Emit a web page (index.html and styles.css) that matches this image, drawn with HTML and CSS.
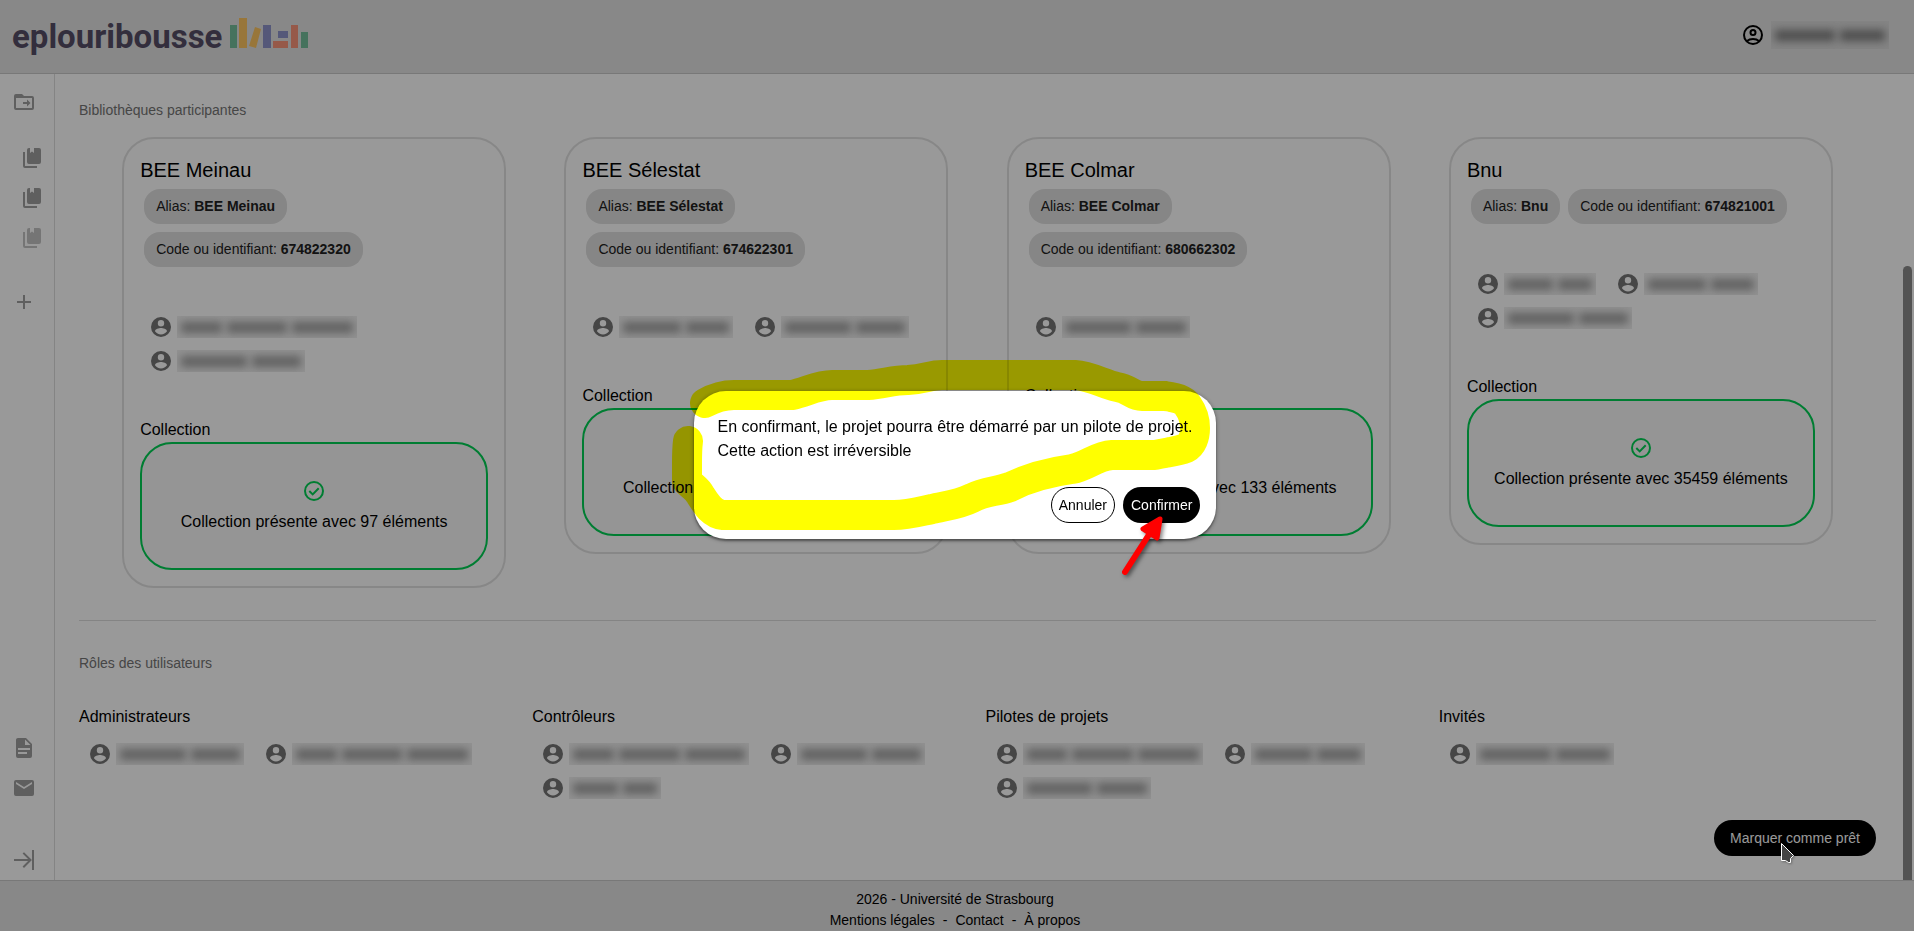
FILE: index.html
```html
<!DOCTYPE html>
<html lang="fr">
<head>
<meta charset="utf-8">
<title>eplouribousse</title>
<link rel="stylesheet" href="styles.css">
</head>
<body>
<svg class="sprite" aria-hidden="true">
  <symbol id="i-user" viewBox="0 0 24 24"><path fill-rule="evenodd" d="M12 2a10 10 0 1 0 0 20 10 10 0 0 0 0-20zM12 5a3.2 3.2 0 1 1 0 6.400 3.200 3.200 0 0 1 0-6.400zM12 19.400c-2.500 0-4.700-1.300-6-3.200.03-2 4-3.100 6-3.100s5.970 1.100 6 3.100c-1.300 1.900-3.500 3.200-6 3.200z"/></symbol>
  <symbol id="i-account" viewBox="0 0 24 24"><g fill="none" stroke="currentColor" stroke-width="2"><circle cx="12" cy="12" r="9"/><circle cx="12" cy="9.500" r="2.500"/><path d="M5.700 18.200C7.500 16.700 9.600 16 12 16s4.500.7 6.300 2.200"/></g></symbol>
  <symbol id="i-check" viewBox="0 0 24 24"><g fill="none" stroke="currentColor" stroke-width="2"><circle cx="12" cy="12" r="9"/><path d="M7.300 12l3.400 3.400 6-6.200"/></g></symbol>
  <symbol id="i-folder" viewBox="0 0 24 24"><path fill-rule="evenodd" d="M20 18H4V8h16v10zM12 6l-2-2H4a2 2 0 0 0-2 2v12a2 2 0 0 0 2 2h16a2 2 0 0 0 2-2V8a2 2 0 0 0-2-2h-8z"/><path d="M11 12v2h4v2.500l3.500-3.500L15 9.500V12z"/></symbol>
  <symbol id="i-books" viewBox="0 0 24 24"><path d="M19 18H9a2 2 0 0 1-2-2V4a2 2 0 0 1 2-2h1v5l2-1.500L14 7V2h5a2 2 0 0 1 2 2v12a2 2 0 0 1-2 2m-2 2v2H5a2 2 0 0 1-2-2V6h2v14h12z"/></symbol>
  <symbol id="i-plus" viewBox="0 0 24 24"><path d="M19 13h-6v6h-2v-6H5v-2h6V5h2v6h6v2z"/></symbol>
  <symbol id="i-doc" viewBox="0 0 24 24"><path d="M13 9h5.500L13 3.500V9M6 2h8l6 6v12a2 2 0 0 1-2 2H6a2 2 0 0 1-2-2V4c0-1.110.89-2 2-2m9 16v-2H6v2h9m3-4v-2H6v2h12z"/></symbol>
  <symbol id="i-mail" viewBox="0 0 24 24"><path d="M20 8l-8 5-8-5V6l8 5 8-5v2m0-4H4a2 2 0 0 0-2 2v12a2 2 0 0 0 2 2h16a2 2 0 0 0 2-2V6a2 2 0 0 0-2-2z"/></symbol>
  <symbol id="i-expand" viewBox="0 0 24 24"><path d="M19.920 12.080L12 20l-1.410-1.420 5.490-5.500H2v-2h14.080l-5.500-5.500L12 4.160l7.920 7.920M22 2h-2v20h2V2z"/></symbol>
</svg>

<div class="app">
  <header class="header">
    <a class="brand" href="#">
      <span class="brand-name">eplouribousse</span>
      <svg class="brand-books" viewBox="0 0 80 31" width="80" height="31" aria-hidden="true">
        <path fill="#76bf9b" d="M1 7h7v23H1zM72 14h7v16h-7z"/>
        <path fill="#fdc561" d="M10 0h8v30h-8zM26 9l6 2-5 19-7-2z"/>
        <path fill="#8e93ca" d="M34 7h8v23h-8zM49 13h10v7H49z"/>
        <path fill="#fa947b" d="M44 23h15v7H44zM62 7h7v23h-7z"/>
      </svg>
    </a>
    <div class="account">
      <svg class="icon"><use href="#i-account"/></svg>
      <span class="veil veil-mid"><i></i><i></i></span>
    </div>
  </header>

  <div class="body">
    <nav class="sidebar">
      <a class="nav" href="#"><svg class="icon"><use href="#i-folder"/></svg></a>
      <div class="nav-group">
        <a class="nav nested" href="#"><svg class="icon"><use href="#i-books"/></svg></a>
        <a class="nav nested" href="#"><svg class="icon"><use href="#i-books"/></svg></a>
        <a class="nav nested muted" href="#"><svg class="icon"><use href="#i-books"/></svg></a>
      </div>
      <a class="nav add" href="#"><svg class="icon"><use href="#i-plus"/></svg></a>
      <div class="nav-end">
        <a class="nav" href="#"><svg class="icon"><use href="#i-doc"/></svg></a>
        <a class="nav" href="#"><svg class="icon"><use href="#i-mail"/></svg></a>
        <button class="nav toggle" type="button"><svg class="icon"><use href="#i-expand"/></svg></button>
      </div>
    </nav>

    <main class="main">
      <h2 class="section-title">Bibliothèques participantes</h2>
      <div class="cards">
        <article class="card">
          <h3 class="card-title">BEE Meinau</h3>
          <div class="chips">
            <span class="chip">Alias: <b>BEE Meinau</b></span>
            <span class="chip">Code ou identifiant: <b>674822320</b></span>
          </div>
          <div class="users">
            <span class="user name-long"><svg class="icon"><use href="#i-user"/></svg><span class="veil"><i></i><i></i><i></i></span></span>
            <span class="user name-mid"><svg class="icon"><use href="#i-user"/></svg><span class="veil"><i></i><i></i></span></span>
          </div>
          <h4 class="label">Collection</h4>
          <div class="status"><svg class="icon"><use href="#i-check"/></svg><span>Collection présente avec 97 éléments</span></div>
        </article>
        <article class="card">
          <h3 class="card-title">BEE Sélestat</h3>
          <div class="chips">
            <span class="chip">Alias: <b>BEE Sélestat</b></span>
            <span class="chip">Code ou identifiant: <b>674622301</b></span>
          </div>
          <div class="users">
            <span class="user name-small"><svg class="icon"><use href="#i-user"/></svg><span class="veil"><i></i><i></i></span></span>
            <span class="user name-mid"><svg class="icon"><use href="#i-user"/></svg><span class="veil"><i></i><i></i></span></span>
          </div>
          <h4 class="label">Collection</h4>
          <div class="status"><svg class="icon"><use href="#i-check"/></svg><span>Collection présente avec 42 éléments</span></div>
        </article>
        <article class="card">
          <h3 class="card-title">BEE Colmar</h3>
          <div class="chips">
            <span class="chip">Alias: <b>BEE Colmar</b></span>
            <span class="chip">Code ou identifiant: <b>680662302</b></span>
          </div>
          <div class="users">
            <span class="user name-mid"><svg class="icon"><use href="#i-user"/></svg><span class="veil"><i></i><i></i></span></span>
          </div>
          <h4 class="label">Collection</h4>
          <div class="status"><svg class="icon"><use href="#i-check"/></svg><span>Collection présente avec 133 éléments</span></div>
        </article>
        <article class="card">
          <h3 class="card-title">Bnu</h3>
          <div class="chips">
            <span class="chip">Alias: <b>Bnu</b></span>
            <span class="chip">Code ou identifiant: <b>674821001</b></span>
          </div>
          <div class="users">
            <span class="user name-short"><svg class="icon"><use href="#i-user"/></svg><span class="veil"><i></i><i></i></span></span>
            <span class="user name-small"><svg class="icon"><use href="#i-user"/></svg><span class="veil"><i></i><i></i></span></span>
            <span class="user name-mid"><svg class="icon"><use href="#i-user"/></svg><span class="veil"><i></i><i></i></span></span>
          </div>
          <h4 class="label">Collection</h4>
          <div class="status"><svg class="icon"><use href="#i-check"/></svg><span>Collection présente avec 35459 éléments</span></div>
        </article>
      </div>

      <hr class="rule">

      <h2 class="section-title">Rôles des utilisateurs</h2>
      <div class="roles">
        <section>
          <h3 class="label">Administrateurs</h3>
          <div class="role-users">
            <span class="user name-mid"><svg class="icon"><use href="#i-user"/></svg><span class="veil"><i></i><i></i></span></span>
            <span class="user name-long"><svg class="icon"><use href="#i-user"/></svg><span class="veil"><i></i><i></i><i></i></span></span>
          </div>
        </section>
        <section>
          <h3 class="label">Contrôleurs</h3>
          <div class="role-users">
            <span class="user name-long"><svg class="icon"><use href="#i-user"/></svg><span class="veil"><i></i><i></i><i></i></span></span>
            <span class="user name-mid"><svg class="icon"><use href="#i-user"/></svg><span class="veil"><i></i><i></i></span></span>
            <span class="user name-short"><svg class="icon"><use href="#i-user"/></svg><span class="veil"><i></i><i></i></span></span>
          </div>
        </section>
        <section>
          <h3 class="label">Pilotes de projets</h3>
          <div class="role-users">
            <span class="user name-long"><svg class="icon"><use href="#i-user"/></svg><span class="veil"><i></i><i></i><i></i></span></span>
            <span class="user name-small"><svg class="icon"><use href="#i-user"/></svg><span class="veil"><i></i><i></i></span></span>
            <span class="user name-mid"><svg class="icon"><use href="#i-user"/></svg><span class="veil"><i></i><i></i></span></span>
          </div>
        </section>
        <section>
          <h3 class="label">Invités</h3>
          <div class="role-users">
            <span class="user name-wide"><svg class="icon"><use href="#i-user"/></svg><span class="veil"><i></i><i></i></span></span>
          </div>
        </section>
      </div>

      <div class="main-actions"><button class="btn btn-solid btn-wide" type="button">Marquer comme prêt</button></div>
      <div class="scroll-thumb"></div>
    </main>
  </div>

  <footer class="footer">
    <div>2026 - Université de Strasbourg</div>
    <div class="links"><a href="#">Mentions légales</a><span>-</span><a href="#">Contact</a><span>-</span><a href="#">À propos</a></div>
  </footer>
</div>

<div class="backdrop">
  <div class="dialog" role="dialog" aria-modal="true" aria-labelledby="dialog-text">
    <p class="dialog-text" id="dialog-text">En confirmant, le projet pourra être démarré par un pilote de projet.<br>Cette action est irréversible</p>
    <div class="dialog-actions">
      <button class="btn btn-outline" type="button">Annuler</button>
      <button class="btn btn-solid" type="button">Confirmer</button>
    </div>
  </div>
</div>

<svg class="highlight" viewBox="657 345 600 240" width="600" height="240" aria-hidden="true">
  <path fill="none" stroke="#ff0" stroke-width="30" stroke-linecap="round" stroke-linejoin="round" d="M705 402C714 397 722 394 734 394H792C806 391 818 384 832 384H868C884 383 892 379 908 379C925 378 930 374 942 374H1075C1090 375 1104 383 1117 386C1130 388 1132 395 1142 395H1165C1175 396 1185 399 1188 405C1193 412 1195 418 1195 427C1195 436 1192 444 1186 447C1176 451 1167 451 1155 454H1112C1096 455 1088 465 1072 468C1050 471 1030 476 1010 486C996 491 985 490 972 497C958 504 944 505 932 508C918 511 908 514 894 514H723C712 513 706 503 701 495C697 487 692 486 687 480V462C687 454 687 448 688 440"/>
</svg>
<svg class="arrow" viewBox="1115 505 60 75" width="60" height="75" aria-hidden="true">
  <g fill="red" stroke="red" stroke-linejoin="round" stroke-linecap="round"><path stroke-width="6" d="M1125 571L1150 532"/><path stroke-width="5" d="M1160 518L1143 528L1157 537z"/></g>
</svg>
<svg class="cursor" viewBox="0 0 18 24" width="18" height="24" aria-hidden="true"><path fill="#444" stroke="#fff" d="M3.500 2.500L15.500 14.500L12.500 17.500V21.500H10.500L7.500 19.500H3.500z"/></svg>
</body>
</html>
```
FILE: styles.css
```css
* { box-sizing: border-box; }

body {
  margin: 0;
  font-family: "Liberation Sans", Arial, sans-serif;
  font-size: 16px;
  line-height: 24px;
  color: #000;
  background: #fff;
}

h2, h3, h4, p { margin: 0; font-weight: 400; }
a { color: inherit; text-decoration: none; }
.sprite { position: absolute; width: 0; height: 0; }
.icon { display: block; flex: none; width: 24px; height: 24px; fill: currentColor; }

.app { display: flex; flex-direction: column; min-height: 100vh; }

/* Header */
.header {
  display: flex;
  align-items: center;
  justify-content: space-between;
  height: 74px;
  padding: 0 25px 3px 12px;
  background: #e3e3e3;
  border-bottom: 1px solid #c8c8c8;
}
.brand { display: flex; align-items: center; gap: 7px; }
.brand-name {
  padding-top: 4px;
  font-family: Roboto, "Liberation Sans", sans-serif;
  font-size: 33px;
  line-height: 48px;
  font-weight: 700;
  color: #554e66;
}
.brand-books { display: block; margin-bottom: 3px; }
.account { display: flex; align-items: center; gap: 6px; }

/* Sidebar */
.body { flex: 1; display: flex; }
.sidebar {
  display: flex;
  flex-direction: column;
  flex: none;
  width: 55px;
  padding-top: 8px;
  border-right: 1px solid #dcdcdc;
  color: #9e9e9e;
}
.nav {
  display: block;
  width: 100%;
  padding: 8px 0 8px 12px;
  border: 0;
  background: none;
  color: inherit;
}
.nav-group { margin: 16px 0 24px; }
.nested { padding-left: 20px; }
.muted { opacity: 0.6; }
.nav-end { margin-top: auto; }
.toggle { margin-top: 32px; }

/* Main column */
.main {
  position: relative;
  flex: 1;
  min-width: 0;
  display: flex;
  flex-direction: column;
  padding: 26px 38px 24px 24px;
}
.section-title { font-size: 14px; line-height: 21px; color: #757575; }
.cards {
  display: grid;
  grid-template-columns: repeat(4, 1fr);
  gap: 4px;
  align-items: start;
  justify-items: center;
  margin-top: 16px;
  padding: 0 16px;
}
.card {
  width: 100%;
  max-width: 384px;
  padding: 16px;
  border: 2px solid #e2e2e2;
  border-radius: 32px;
}
.card-title { font-size: 20px; line-height: 30px; }
.chips { display: flex; flex-wrap: wrap; }
.chip {
  margin: 4px;
  padding: 7px 12px;
  border-radius: 16px;
  background: #e0e0e0;
  color: #212121;
  font-size: 14px;
  line-height: 21px;
}
.users { display: flex; flex-wrap: wrap; margin: 39px 0 40px; padding-left: 9px; }
.user { display: flex; align-items: center; gap: 4px; height: 34px; color: #757575; }
.label { font-size: 16px; line-height: 24px; }
.status {
  display: flex;
  flex-direction: column;
  align-items: center;
  justify-content: center;
  gap: 7px;
  min-height: 128px;
  border: 2px solid #00d154;
  border-radius: 32px;
  background: #f9f9f9;
}
.status .icon { color: #00d154; }

/* Obscured names */
.veil {
  display: flex;
  align-items: center;
  gap: 5px;
  height: 22px;
  padding: 0 4px;
  margin-right: 20px;
  overflow: hidden;
  background: #f2f2f2;
}
.veil i { flex: 3; height: 11px; background: #a0a0a0; filter: blur(4px); }
.veil i:first-child { flex: 4; }
.name-short .veil { width: 92px; }
.name-small .veil { width: 114px; }
.name-mid .veil { width: 128px; }
.name-wide .veil { width: 138px; }
.name-long .veil { width: 180px; }
.name-long .veil i:first-child { flex: 2; }
.veil-mid { width: 118px; height: 28px; margin: 0; background: #dcdcdc; }
.header .veil i { background: #808080; }

.rule { width: 100%; height: 1px; margin: 32px 0; border: 0; background: #dcdcdc; }
.roles {
  display: grid;
  grid-template-columns: repeat(4, 1fr);
  gap: 16px;
  margin-top: 31px;
}
.role-users { display: flex; flex-wrap: wrap; margin-top: 8px; padding-left: 9px; }
.main-actions { display: flex; justify-content: flex-end; margin-top: auto; }
.scroll-thumb {
  position: absolute;
  top: 192px;
  right: 2px;
  bottom: 0;
  width: 9px;
  border-radius: 5px 5px 0 0;
  background: #8a8a8a;
}

.btn {
  height: 36px;
  padding: 0 8px;
  border: 0;
  border-radius: 18px;
  font: 14px/20px "Liberation Sans", Arial, sans-serif;
}
.btn-solid { background: #000; color: #fff; }
.btn-outline { padding: 0 7px; border: 1px solid #000; background: transparent; color: #000; }
.btn-wide { padding: 0 16px; }

/* Footer */
.footer {
  padding: 8px 4px 0 0;
  border-top: 1px solid #c8c8c8;
  background: #e3e3e3;
  font-size: 14px;
  line-height: 21px;
  text-align: center;
}
.links { display: flex; justify-content: center; gap: 8px; }

/* Confirmation dialog */
.backdrop {
  position: fixed;
  inset: 0;
  display: flex;
  align-items: center;
  justify-content: center;
  padding: 0 4px 1px 0;
  background: rgba(0, 0, 0, 0.4);
}
.dialog {
  border-radius: 32px;
  background: #fff;
  box-shadow: 0 1px 5px rgba(0, 0, 0, 0.4), 0 2px 2px rgba(0, 0, 0, 0.3);
}
.dialog-text { padding: 24px; }
.dialog-actions { display: flex; justify-content: flex-end; gap: 8px; padding: 0 16px 16px; }

/* Annotations floating over the page */
.highlight, .arrow, .cursor { position: fixed; pointer-events: none; }
.highlight { left: calc(50% - 300px); top: calc(50% - 120px); mix-blend-mode: multiply; }
.arrow {
  left: calc(50% + 158px);
  top: calc(50% + 40px);
  overflow: visible;
  filter: drop-shadow(2px 2px 2px rgba(0, 0, 0, 0.5));
}
.cursor { right: 118px; bottom: 66px; filter: drop-shadow(1px 1px 1px rgba(0, 0, 0, 0.3)); }
```
